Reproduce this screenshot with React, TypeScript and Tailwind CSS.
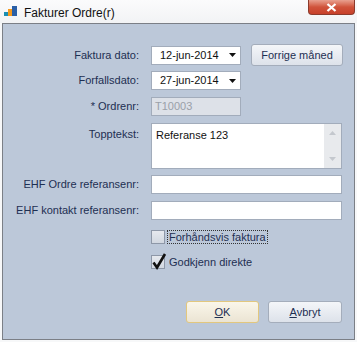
import React from 'react';

const font = { fontFamily: '"Liberation Sans", Arial, sans-serif' };

function Label({ children }: { children: React.ReactNode }) {
  return <div className="w-[136px] shrink-0 text-right text-[11px] text-[#1e2f52]">{children}</div>;
}

function DateBox({ value }: { value: string }) {
  return (
    <div className="flex h-[19px] w-[90px] items-center justify-between border border-[#a2acbb] bg-white pl-[8px] pr-[4px] text-[11px] text-[#111]">
      <span>{value}</span>
      <svg width="7" height="4" viewBox="0 0 7 4">
        <path d="M0 0h7L3.5 4z" fill="#111" />
      </svg>
    </div>
  );
}

function TextBox() {
  return <div className="h-[19px] w-[191px] border border-[#a2acbb] bg-white" />;
}

function Check({ checked, label, focus }: { checked?: boolean; label: string; focus?: boolean }) {
  return (
    <div className="flex h-[14px] items-center">
      <div className="relative h-[14px] w-[14px] border border-[#8e98a8] bg-gradient-to-b from-[#e6e9ee] to-[#d2d8e1]">
        {checked && (
          <svg className="absolute -left-[1px] -top-[4px]" width="16" height="18" viewBox="0 0 16 18">
            <path d="M2.5 10.5l3.5 5L14 2" fill="none" stroke="#111" strokeWidth="2.6" />
          </svg>
        )}
      </div>
      <span
        className={`ml-[2px] px-[1px] text-[11px] leading-[12px] text-[#1e2f52] ${
          focus ? 'border border-dotted border-[#333]' : 'border border-transparent'
        }`}
      >
        {label}
      </span>
    </div>
  );
}

function Btn({ children, primary, w }: { children: React.ReactNode; primary?: boolean; w: string }) {
  return (
    <div
      className={`flex h-[22px] items-center justify-center rounded-[3px] border text-[11px] text-[#1e2f52] ${w} ${
        primary
          ? 'border-[#e2c77e] bg-gradient-to-b from-[#faf6ea] to-[#ebe4d3]'
          : 'border-[#a4adbb] bg-gradient-to-b from-[#f4f6f9] to-[#dde2ea]'
      }`}
    >
      {children}
    </div>
  );
}

export default function App() {
  return (
    <div className="h-[342px] w-[357px] overflow-hidden bg-[#f7f8f9]" style={font}>
      {/* title bar */}
      <div className="flex h-[23px] items-start bg-gradient-to-b from-[#fbfbfc] to-[#f2f3f5]">
        <svg className="ml-[4px] mt-[6px]" width="13" height="10" viewBox="0 0 13 10">
          <rect x="0" y="6" width="4" height="4" fill="#1a8fb3" />
          <rect x="4" y="3" width="4" height="7" fill="#f59a1e" />
          <rect x="8" y="0" width="5" height="10" fill="#2b5fa6" />
        </svg>
        <span className="ml-[7px] mt-[4px] text-[12px] text-[#111]">Fakturer Ordre(r)</span>
        <div className="ml-auto mr-[2px] flex h-[15px] w-[47px] items-center justify-center rounded-b-[4px] border border-t-0 border-[#8b3a2c] bg-gradient-to-b from-[#e8a08f] via-[#d0533b] to-[#c7402a]">
          <svg width="11" height="9" viewBox="0 0 11 9">
            <path d="M1.5 1l8 7M9.5 1l-8 7" stroke="#fff" strokeWidth="2.3" />
          </svg>
        </div>
      </div>

      {/* panel */}
      <div className="ml-[2px] h-[317px] w-[353px] border border-[#7b7f86] bg-[#bcc8d9] pt-[20px]">
        <div className="flex h-[22px] items-center">
          <Label>Faktura dato:</Label>
          <div className="ml-[12px]">
            <DateBox value="12-jun-2014" />
          </div>
          <div className="ml-[10px]">
            <Btn w="w-[92px]">Forrige måned</Btn>
          </div>
        </div>

        <div className="mt-[5px] flex h-[19px] items-center">
          <Label>Forfallsdato:</Label>
          <div className="ml-[12px]">
            <DateBox value="27-jun-2014" />
          </div>
        </div>

        <div className="mt-[7px] flex h-[19px] items-center">
          <Label>* Ordrenr:</Label>
          <div className="ml-[12px] flex h-[19px] w-[90px] items-center border border-[#a2acbb] bg-[#dde1e8] pl-[3px] text-[11px] text-[#9aa0a8]">
            T10003
          </div>
        </div>

        <div className="mt-[7px] flex h-[46px] items-start">
          <div className="pt-[3px]">
            <Label>Topptekst:</Label>
          </div>
          <div className="ml-[12px] flex h-[46px] w-[191px] border border-[#a2acbb] bg-white">
            <div className="flex-1 pl-[4px] pt-[3px] text-[11px] text-[#111]">Referanse 123</div>
            <div className="flex w-[17px] flex-col items-center justify-between bg-[#e8eaed] py-[7px]">
              <svg width="7" height="4" viewBox="0 0 7 4">
                <path d="M0 4h7L3.5 0z" fill="#c4c8ce" />
              </svg>
              <svg width="7" height="4" viewBox="0 0 7 4">
                <path d="M0 0h7L3.5 4z" fill="#c4c8ce" />
              </svg>
            </div>
          </div>
        </div>

        <div className="mt-[6px] flex h-[19px] items-center">
          <Label>EHF Ordre referansenr:</Label>
          <div className="ml-[12px]">
            <TextBox />
          </div>
        </div>

        <div className="mt-[7px] flex h-[19px] items-center">
          <Label>EHF kontakt referansenr:</Label>
          <div className="ml-[12px]">
            <TextBox />
          </div>
        </div>

        <div className="ml-[148px] mt-[10px]">
          <Check label="Forhåndsvis faktura" focus />
        </div>
        <div className="ml-[148px] mt-[11px]">
          <Check label="Godkjenn direkte" checked />
        </div>

        <div className="mr-[12px] mt-[32px] flex justify-end gap-[9px]">
          <Btn w="w-[73px]" primary>
            <span className="underline">O</span>K
          </Btn>
          <Btn w="w-[74px]">
            <span className="underline">A</span>vbryt
          </Btn>
        </div>
      </div>
    </div>
  );
}
